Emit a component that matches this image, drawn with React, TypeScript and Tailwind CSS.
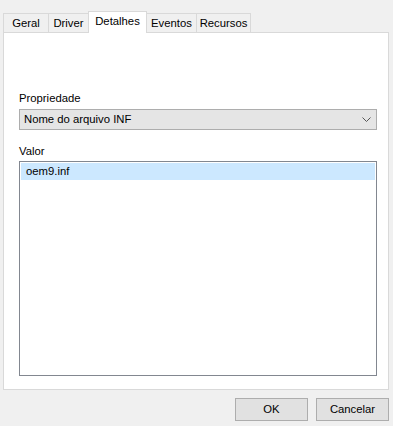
import React from 'react'

const tabs = [
  { name: 'Geral', w: 'w-[46px]' },
  { name: 'Driver', w: 'w-[41px]' },
  { name: 'Detalhes', w: 'w-[59px]' },
  { name: 'Eventos', w: 'w-[51px]' },
  { name: 'Recursos', w: 'w-[55px]' },
]

function Chevron() {
  return (
    <svg width="9" height="6" viewBox="0 0 9 6" className="block">
      <path d="M0.5 0.5 L4.5 4.5 L8.5 0.5" fill="none" stroke="#555" strokeWidth="1" />
    </svg>
  )
}

export default function App() {
  const active = 'Detalhes'
  return (
    <div
      className="relative h-[426px] w-[393px] overflow-hidden bg-[#f0f0f0] text-[11.3px] text-black"
      style={{ fontFamily: '"Liberation Sans", Arial, sans-serif' }}
    >
      <div className="pl-[3px] pr-[4px] pt-[10px]">
        {/* Tabs */}
        <div className="relative z-10 flex h-[22px] items-end">
          {tabs.map(t =>
            t.name === active ? (
              <div
                key={t.name}
                className={`-mb-px -ml-px flex h-[22px] items-center justify-center border border-b-0 border-[#d9d9d9] bg-white pb-[2px] ${t.w}`}
              >
                {t.name}
              </div>
            ) : (
              <div
                key={t.name}
                className={`-ml-px flex h-[19px] items-center justify-center border border-b-0 border-[#d9d9d9] bg-[#f0f0f0] pt-[1px] first:ml-0 ${t.w}`}
              >
                {t.name}
              </div>
            )
          )}
        </div>

        {/* Panel */}
        <div className="h-[358px] border border-[#d9d9d9] bg-white pl-[15px] pr-[11px] pt-[58px]">
          <div className="leading-[15px]">Propriedade</div>
          <div className="mt-[3px] flex h-[21px] items-center justify-between border border-[#adadad] bg-[#e5e5e5] pl-[4px] pr-[5px]">
            <span>Nome do arquivo INF</span>
            <Chevron />
          </div>

          <div className="mt-[14px] leading-[15px]">Valor</div>
          <div className="mt-[2px] h-[215px] border border-[#828790] bg-white p-px">
            <div className="flex h-[17px] items-center border border-[#cce8ff] bg-[#cce8ff] pl-[4px]">
              oem9.inf
            </div>
          </div>
        </div>

        {/* Buttons */}
        <div className="mt-[8px] flex justify-end gap-[8px]">
          <button className="flex h-[23px] w-[73px] items-center justify-center border border-[#adadad] bg-[#e1e1e1]">
            OK
          </button>
          <button className="flex h-[23px] w-[73px] items-center justify-center border border-[#adadad] bg-[#e1e1e1]">
            Cancelar
          </button>
        </div>
      </div>
    </div>
  )
}
